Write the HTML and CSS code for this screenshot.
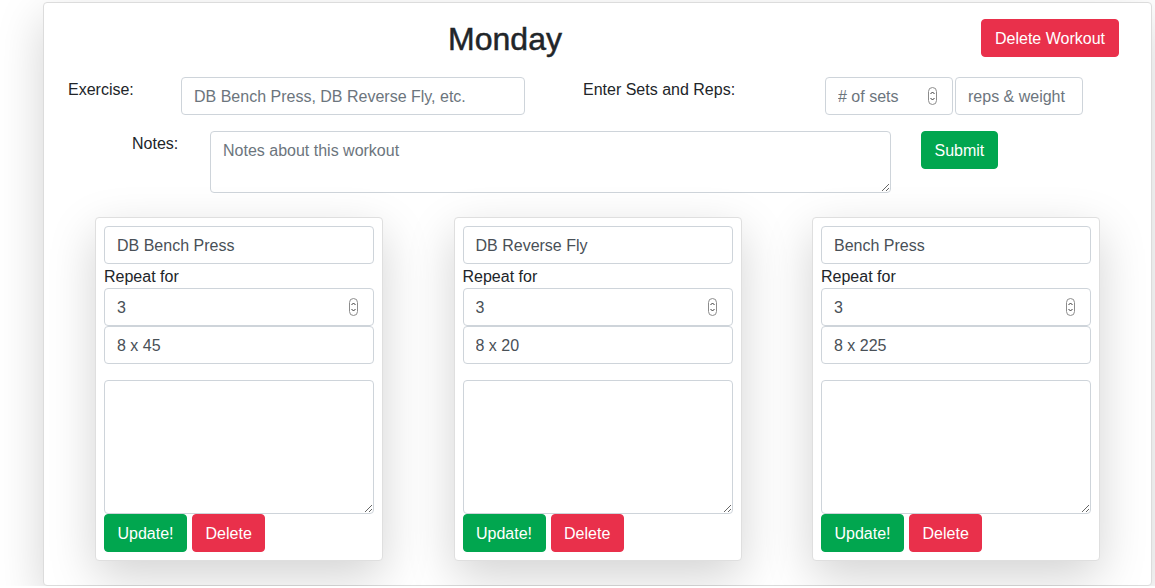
FILE: index.html
```html
<!DOCTYPE html>
<html>
<head>
<meta charset="utf-8">
<link rel="stylesheet" href="styles.css">
</head>
<body>
<div class="workout">
  <div class="header">
    <h2 class="title">Monday</h2>
    <button class="btn btn-danger btn-wide">Delete Workout</button>
  </div>
  <div class="row row-ex">
    <label class="lbl lbl-ex">Exercise:</label>
    <input class="form-control in-ex" type="text" placeholder="DB Bench Press, DB Reverse Fly, etc.">
    <label class="lbl lbl-sets">Enter Sets and Reps:</label>
    <div class="num num-top">
      <input class="form-control" type="text" placeholder="# of sets">
      <svg class="spin" width="9" height="18" viewBox="0 0 9 18"><rect x="0.5" y="0.5" width="8" height="17" rx="4" fill="#fff" stroke="#8c8c8c"/><polyline points="2.5,7 4.5,5 6.5,7" fill="none" stroke="#3a3a3a" stroke-width="1"/><polyline points="2.5,11 4.5,13 6.5,11" fill="none" stroke="#3a3a3a" stroke-width="1"/></svg>
    </div>
    <input class="form-control in-reps" type="text" placeholder="reps &amp; weight">
  </div>
  <div class="row row-notes">
    <label class="lbl lbl-notes">Notes:</label>
    <textarea class="form-control notes" rows="2" placeholder="Notes about this workout"></textarea>
    <button class="btn btn-success">Submit</button>
  </div>
  <div class="cards">
    <div class="card">
      <input class="form-control" type="text" value="DB Bench Press">
      <label class="lbl">Repeat for</label>
      <div class="num">
        <input class="form-control" type="text" value="3">
        <svg class="spin" width="9" height="18" viewBox="0 0 9 18"><rect x="0.5" y="0.5" width="8" height="17" rx="4" fill="#fff" stroke="#8c8c8c"/><polyline points="2.5,7 4.5,5 6.5,7" fill="none" stroke="#3a3a3a" stroke-width="1"/><polyline points="2.5,11 4.5,13 6.5,11" fill="none" stroke="#3a3a3a" stroke-width="1"/></svg>
      </div>
      <input class="form-control" type="text" value="8 x 45">
      <textarea class="form-control card-notes"></textarea>
      <div class="actions">
        <button class="btn btn-success">Update!</button>
        <button class="btn btn-danger">Delete</button>
      </div>
    </div>
    <div class="card">
      <input class="form-control" type="text" value="DB Reverse Fly">
      <label class="lbl">Repeat for</label>
      <div class="num">
        <input class="form-control" type="text" value="3">
        <svg class="spin" width="9" height="18" viewBox="0 0 9 18"><rect x="0.5" y="0.5" width="8" height="17" rx="4" fill="#fff" stroke="#8c8c8c"/><polyline points="2.5,7 4.5,5 6.5,7" fill="none" stroke="#3a3a3a" stroke-width="1"/><polyline points="2.5,11 4.5,13 6.5,11" fill="none" stroke="#3a3a3a" stroke-width="1"/></svg>
      </div>
      <input class="form-control" type="text" value="8 x 20">
      <textarea class="form-control card-notes"></textarea>
      <div class="actions">
        <button class="btn btn-success">Update!</button>
        <button class="btn btn-danger">Delete</button>
      </div>
    </div>
    <div class="card">
      <input class="form-control" type="text" value="Bench Press">
      <label class="lbl">Repeat for</label>
      <div class="num">
        <input class="form-control" type="text" value="3">
        <svg class="spin" width="9" height="18" viewBox="0 0 9 18"><rect x="0.5" y="0.5" width="8" height="17" rx="4" fill="#fff" stroke="#8c8c8c"/><polyline points="2.5,7 4.5,5 6.5,7" fill="none" stroke="#3a3a3a" stroke-width="1"/><polyline points="2.5,11 4.5,13 6.5,11" fill="none" stroke="#3a3a3a" stroke-width="1"/></svg>
      </div>
      <input class="form-control" type="text" value="8 x 225">
      <textarea class="form-control card-notes"></textarea>
      <div class="actions">
        <button class="btn btn-success">Update!</button>
        <button class="btn btn-danger">Delete</button>
      </div>
    </div>
  </div>
</div>
</body>
</html>
```

FILE: styles.css
```css
* { box-sizing: border-box; }
html, body {
  margin: 0;
  padding: 0;
  background: #fff;
  overflow: hidden;
}
body {
  font-family: "Liberation Sans", Arial, Helvetica, sans-serif;
  font-size: 16px;
  line-height: 1.5;
  color: #212529;
}
.workout {
  margin: 2px 0 0 43px;
  width: 1109px;
  height: 584px;
  border: 1px solid #dcdcdc;
  border-radius: 4px;
  background: #fff;
  box-shadow: 0 16px 48px rgba(0,0,0,.175);
  padding-top: 16px;
}
.header {
  display: flex;
  align-items: flex-start;
  gap: 15px;
  height: 38px;
  padding-right: 32px;
}
.title {
  flex: 1;
  margin: 0;
  text-align: center;
  font-size: 32px;
  font-weight: 400;
  line-height: 40px;
  height: 38px;
  color: #212529;
  -webkit-text-stroke: 0.5px #212529;
}
.btn {
  font-family: inherit;
  font-size: 16px;
  line-height: 1.5;
  height: 38px;
  padding: 7px 12.5px 5px;
  border: 1px solid transparent;
  border-radius: 4px;
  color: #fff;
  cursor: pointer;
}
.btn-wide { width: 138px; padding-left: 0; padding-right: 0; }
.btn-danger { background: #e9304b; border-color: #e9304b; }
.btn-success { background: #01a64f; border-color: #01a64f; }
.form-control {
  display: block;
  width: 100%;
  height: 38px;
  padding: 7px 12px 5px;
  font-family: inherit;
  font-size: 16px;
  line-height: 1.5;
  color: #495057;
  background: #fff;
  border: 1px solid #ced4da;
  border-radius: 4px;
}
.form-control::placeholder { color: #6c757d; opacity: 1; }
.row {
  display: flex;
  align-items: flex-start;
}
.lbl { display: block; }
.row .lbl { padding-top: 1px; }
.row-ex {
  margin-top: 20px;
  padding-left: 24px;
}
.lbl-ex { width: 113px; }
.in-ex { width: 344px; }
.lbl-sets { width: 242px; margin-left: 58px; }
.num { position: relative; }
.num-top { width: 128px; }
.in-reps { width: 128px; margin-left: 2px; }
.spin {
  position: absolute;
  top: 10px;
  right: 16px;
}
.row-notes {
  margin-top: 16px;
  padding-left: 88px;
}
.lbl-notes { width: 78px; }
.notes {
  width: 681px;
  height: 62px;
  resize: vertical;
}
.row-notes .btn { margin-left: 30px; }
.cards {
  display: flex;
  justify-content: space-between;
  padding: 0 51px;
  margin-top: 24px;
}
.card {
  width: 288px;
  padding: 8px;
  border: 1px solid #dfdfdf;
  border-radius: 4px;
  background: #fff;
  box-shadow: 0 16px 48px rgba(0,0,0,.175);
}
.card .lbl { padding-top: 1px; height: 24px; }
.card-notes {
  height: 134px;
  margin-top: 16px;
  resize: vertical;
}
.actions {
  display: flex;
  gap: 5px;
}
```
